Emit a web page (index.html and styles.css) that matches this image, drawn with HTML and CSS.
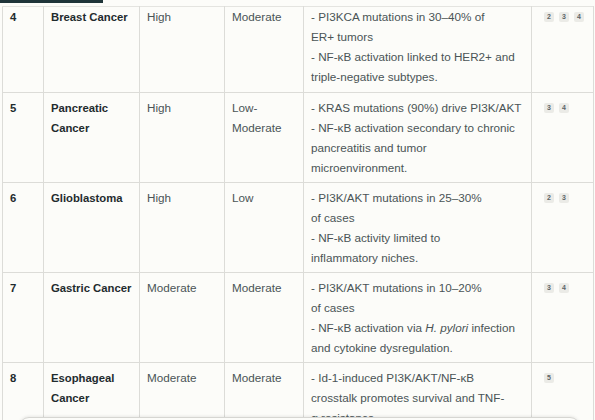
FILE: index.html
```html
<!DOCTYPE html>
<html>
<head>
<meta charset="utf-8">
<link rel="stylesheet" href="styles.css">
</head>
<body>
<div class="topstrip"><div class="tabbar"></div></div>
<table class="grid">
  <colgroup>
    <col class="c1"><col class="c2"><col class="c3"><col class="c4"><col class="c5"><col class="c6">
  </colgroup>
  <tbody>
    <tr class="first">
      <td class="num">4</td>
      <td class="name">Breast Cancer</td>
      <td>High</td>
      <td>Moderate</td>
      <td class="desc"><span class="ln">- PI3KCA mutations in 30–40% of</span><span class="ln">ER+ tumors</span><span class="ln">- NF-κB activation linked to HER2+ and</span><span class="ln">triple-negative subtypes.</span></td>
      <td class="refs"><div class="badges"><span class="b">2</span><span class="b">3</span><span class="b">4</span></div></td>
    </tr>
    <tr>
      <td class="num">5</td>
      <td class="name"><span class="ln">Pancreatic</span><span class="ln">Cancer</span></td>
      <td>High</td>
      <td><span class="ln">Low-</span><span class="ln">Moderate</span></td>
      <td class="desc"><span class="ln">- KRAS mutations (90%) drive PI3K/AKT</span><span class="ln">- NF-κB activation secondary to chronic</span><span class="ln">pancreatitis and tumor</span><span class="ln">microenvironment.</span></td>
      <td class="refs"><div class="badges"><span class="b">3</span><span class="b">4</span></div></td>
    </tr>
    <tr>
      <td class="num">6</td>
      <td class="name">Glioblastoma</td>
      <td>High</td>
      <td>Low</td>
      <td class="desc"><span class="ln">- PI3K/AKT mutations in 25–30%</span><span class="ln">of cases</span><span class="ln">- NF-κB activity limited to</span><span class="ln">inflammatory niches.</span></td>
      <td class="refs"><div class="badges"><span class="b">2</span><span class="b">3</span></div></td>
    </tr>
    <tr>
      <td class="num">7</td>
      <td class="name">Gastric Cancer</td>
      <td>Moderate</td>
      <td>Moderate</td>
      <td class="desc"><span class="ln">- PI3K/AKT mutations in 10–20%</span><span class="ln">of cases</span><span class="ln">- NF-κB activation via <em>H. pylori</em> infection</span><span class="ln">and cytokine dysregulation.</span></td>
      <td class="refs"><div class="badges"><span class="b">3</span><span class="b">4</span></div></td>
    </tr>
    <tr>
      <td class="num">8</td>
      <td class="name"><span class="ln">Esophageal</span><span class="ln">Cancer</span></td>
      <td>Moderate</td>
      <td>Moderate</td>
      <td class="desc"><span class="ln">- Id-1-induced PI3K/AKT/NF-κB</span><span class="ln">crosstalk promotes survival and TNF-</span><span class="ln">α resistance.</span></td>
      <td class="refs"><div class="badges"><span class="b">5</span></div></td>
    </tr>
  </tbody>
</table>
<div class="composer"></div>
</body>
</html>
```
FILE: styles.css
```css
html, body {
  margin: 0;
  padding: 0;
  background: #fcfcf9;
  overflow: hidden;
  height: 420px;
}
body {
  font-family: "Liberation Sans", Arial, sans-serif;
  font-size: 11.7px;
  color: #4a5456;
}
.topstrip {
  height: 6px;
}
.tabbar {
  width: 103px;
  height: 3px;
  background: #1f3539;
}
.grid {
  margin-left: 2px;
  width: 591px;
  border-collapse: collapse;
  table-layout: fixed;
}
.c1 { width: 41px; }
.c2 { width: 96px; }
.c3 { width: 85px; }
.c4 { width: 79px; }
.c5 { width: 228px; }
.c6 { width: 62px; }
.grid td {
  border: 1px solid #dcdcd8;
  vertical-align: top;
  padding: 5px 7px 4px 7px;
  line-height: 20px;
  height: 80px;
}
.grid tr.first td {
  border-top: 1px solid #e4e4e0;
  padding-top: 0;
  padding-bottom: 5px;
}
.ln { display: block; white-space: nowrap; }
.num, .name {
  font-weight: bold;
  font-size: 11.3px;
  color: #1f2b2e;
  white-space: nowrap;
}
.desc { padding-left: 8px; }
.desc em { font-style: italic; }
.grid td.refs { padding-left: 12px; }
.badges {
  display: flex;
  align-items: center;
  gap: 5px;
  height: 20px;
}
.b {
  display: inline-block;
  min-width: 6px;
  height: 10px;
  padding: 0 2px;
  line-height: 10px;
  border-radius: 2px;
  background: #ebebe7;
  color: #5d6568;
  font-size: 7px;
  font-weight: bold;
  text-align: center;
}
.composer {
  position: fixed;
  left: 19px;
  right: 15px;
  top: 417px;
  height: 40px;
  background: #fcfcf9;
  border-top: 1px solid #d6d6d2;
  border-radius: 10px 10px 0 0;
  box-shadow: 0 -1px 3px rgba(0,0,0,0.08);
}
```
